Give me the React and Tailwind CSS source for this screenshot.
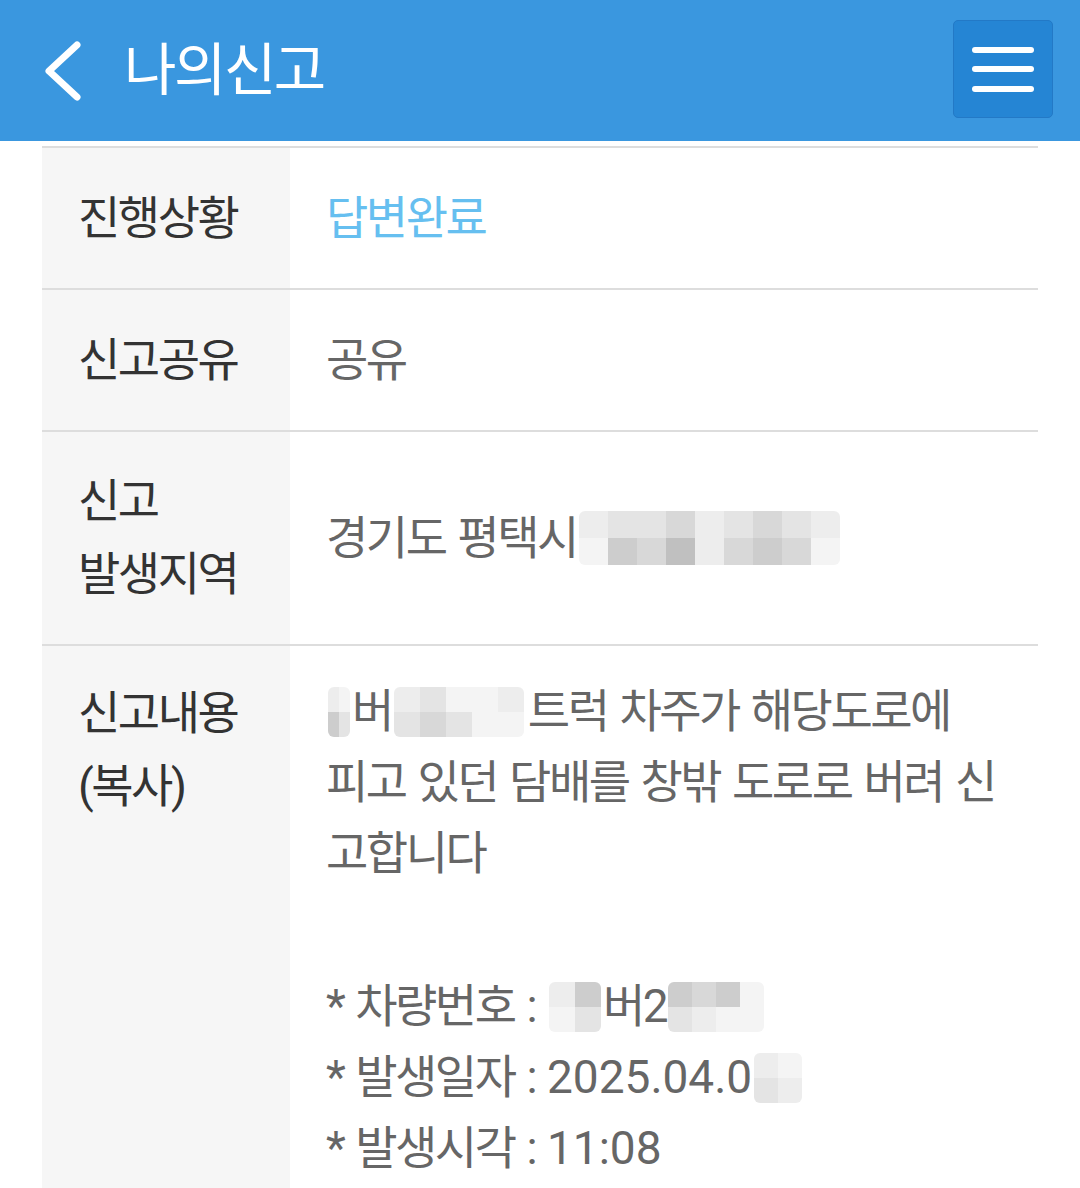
import React from "react";

function Mosaic({ cells, cellW = 28, cellH = 26 }) {
  return (
    <span className="inline-flex flex-col align-middle overflow-hidden rounded-[6px] opacity-90 mx-[2px]">
      {cells.map((row, i) => (
        <span key={i} className="flex">
          {row.map((c, j) => (
            <span
              key={j}
              className="block"
              style={{ width: cellW, height: cellH, background: c }}
            />
          ))}
        </span>
      ))}
    </span>
  );
}

function Row({ label, children, h, alignTop, last }) {
  return (
    <div
      className={`flex ${last ? "flex-1" : "border-b-2 border-[#dddddd]"}`}
      style={h ? { height: h } : undefined}
    >
      <div
        className={`w-[248px] shrink-0 bg-[#f6f6f6] pl-[36px] text-[#333333] flex ${
          alignTop ? "items-start pt-[31px]" : "items-center"
        }`}
      >
        <div className="leading-[73px]">{label}</div>
      </div>
      <div
        className={`flex-1 pl-[36px] text-[#666666] flex ${
          alignTop ? "items-start pt-[30px]" : "items-center"
        }`}
      >
        {children}
      </div>
    </div>
  );
}

const g1 = "#e2e2e2";
const g2 = "#d4d4d4";
const g3 = "#c8c8c8";
const g4 = "#bababa";
const g5 = "#ececec";
const g6 = "#f3f3f3";

export default function App() {
  return (
    <div className="w-[1080px] h-[1188px] overflow-hidden bg-white flex flex-col font-[Roboto,'Noto_Sans_CJK_KR',sans-serif]">
      {/* Header */}
      <div className="h-[141px] shrink-0 bg-[#3a97df] flex items-start justify-between pt-[20px] pl-[44px] pr-[27px]">
        <div className="h-[98px] flex items-center">
          <svg width="40" height="62" viewBox="0 0 40 62" className="mt-[4px]">
            <polyline
              points="33,5 5,31 33,57"
              fill="none"
              stroke="white"
              strokeWidth="7"
              strokeLinecap="round"
              strokeLinejoin="round"
            />
          </svg>
          <span className="ml-[40px] text-white text-[57px] tracking-[-2.5px] leading-none mt-[2px]">
            나의신고
          </span>
        </div>
        <button className="w-[100px] h-[98px] rounded-[5px] bg-[#2585d4] border border-[#2379c6] flex flex-col items-center justify-center gap-[13.5px]">
          <span className="block w-[62px] h-[6px] rounded-full bg-white" />
          <span className="block w-[62px] h-[6px] rounded-full bg-white" />
          <span className="block w-[62px] h-[6px] rounded-full bg-white" />
        </button>
      </div>

      {/* Table */}
      <div className="flex-1 flex flex-col mx-[42px] mt-[5px] border-t-2 border-[#dddddd] text-[46px] tracking-[-2.5px] [word-spacing:3px]">
        <Row label="진행상황" h={142}>
          <span className="text-[#66bff0]">답변완료</span>
        </Row>
        <Row label="신고공유" h={142}>
          <span>공유</span>
        </Row>
        <Row
          label={
            <>
              신고
              <br />
              발생지역
            </>
          }
          h={214}
        >
          <span className="whitespace-nowrap flex items-center">
            경기도 평택시
            <Mosaic
              cellW={29}
              cellH={27}
              cells={[
                [g5, g1, g1, g2, g5, g1, g2, g1, g5],
                [g6, g3, g2, g4, g5, g2, g3, g2, g6],
              ]}
            />
          </span>
        </Row>
        <Row
          label={
            <>
              신고내용
              <br />
              (복사)
            </>
          }
          alignTop
          last
        >
          <div className="leading-[71px] whitespace-nowrap">
            <div className="flex items-center h-[71px]">
              <Mosaic cellW={11} cellH={25} cells={[[g5, g6], [g3, g1]]} />
              <span>버</span>
              <Mosaic
                cellW={26}
                cellH={25}
                cells={[
                  [g5, g1, g6, g6, g5],
                  [g1, g2, g1, g6, g6],
                ]}
              />
              <span className="ml-[2px]">트럭 차주가 해당도로에</span>
            </div>
            <div>피고 있던 담배를 창밖 도로로 버려 신</div>
            <div>고합니다</div>
            <div className="h-[82px]" />
            <div className="flex items-center h-[71px]">
              <span>* 차량번호 :&nbsp;</span>
              <Mosaic
                cellW={26}
                cellH={25}
                cells={[
                  [g5, g3],
                  [g6, g1],
                ]}
              />
              <span>버2</span>
              <Mosaic
                cellW={24}
                cellH={25}
                cells={[
                  [g3, g2, g3, g6],
                  [g1, g5, g6, g6],
                ]}
              />
            </div>
            <div className="flex items-center h-[71px]">
              <span>* 발생일자 :&nbsp;</span>
              <span className="tracking-normal">2025.04.0</span>
              <Mosaic
                cellW={24}
                cellH={25}
                cells={[
                  [g5, g6],
                  [g1, g5],
                ]}
              />
            </div>
            <div className="flex items-center h-[71px]">
              <span>* 발생시각 :&nbsp;</span>
              <span className="tracking-normal">11:08</span>
            </div>
          </div>
        </Row>
      </div>
    </div>
  );
}
